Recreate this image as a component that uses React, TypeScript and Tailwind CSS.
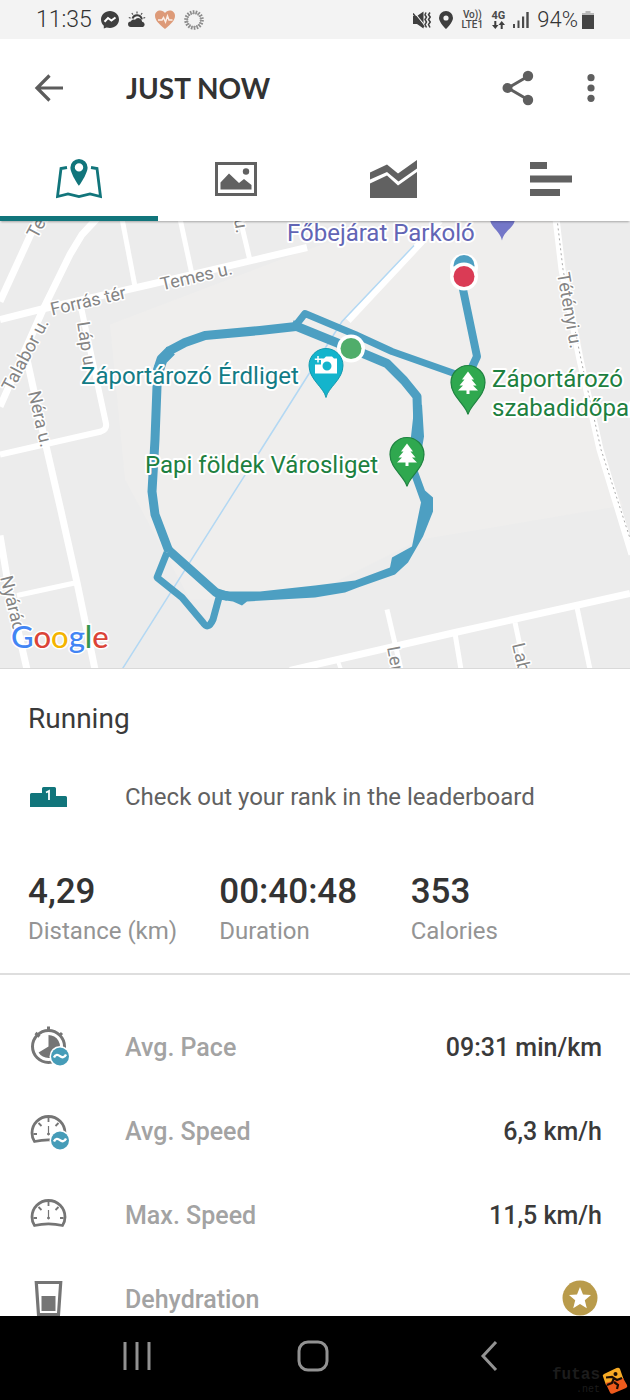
import type { ReactNode } from 'react';

const ROUTE = '#4d9fc2';

function StatusBar() {
  return (
    <div className="flex h-[39px] shrink-0 items-center justify-between bg-[#f3f3f3] pl-9 pr-9 text-[#4a4a4a]">
      <div className="flex items-center gap-[9px]">
        <span className="text-[23px] font-light leading-6 text-[#333]">11:35</span>
        <svg className="h-[18px] w-[18px]" viewBox="0 0 18 18" aria-hidden="true">
          <path fill="#3f3f3f" d="M9 0C4 0 0 3.700 0 8.500c0 2.500 1.100 4.700 2.800 6.200V17.600L5.600 16.400c1 .3 2.200.5 3.400.5 5 0 9-3.700 9-8.500S14 0 9 0z" />
          <path d="M3.500 10.800 7 7l3.400 2.600L14.500 6.500" fill="none" stroke="#fff" strokeWidth="2" />
        </svg>
        <svg className="h-[18px] w-[18px]" viewBox="0 0 18 18" aria-hidden="true">
          <path fill="#3f3f3f" d="M3 16a2.800 2.800 0 0 1-.3-5.600A3.500 3.500 0 0 1 7 8.700a4 4 0 0 1 7.200 2A2.800 2.800 0 0 1 15 16z" />
          <path d="M4.500 7.500a4.800 4.800 0 0 1 9.300.8" fill="none" stroke="#3f3f3f" strokeWidth="2" />
          <path d="M9 .5v2M3.800 2l1.200 1.600M14.200 2 13 3.600M.8 6.500l1.800.6M17.200 6.500l-1.800.6" stroke="#555" strokeWidth="1.200" />
        </svg>
        <svg className="h-[19px] w-5" viewBox="0 0 20 19" aria-hidden="true">
          <path fill="#dd9a78" d="M10 19C4 14 0 10.500 0 5.800 0 2.500 2.400.5 5.200.5c2 0 3.700 1 4.800 2.500C11.100 1.500 12.800.5 14.800.5 17.600.5 20 2.500 20 5.800 20 10.500 16 14 10 19z" />
          <path d="M3 10h4l1.500-2.500 2 4.500L12.500 6l1.500 4h3.500" fill="none" stroke="#fbeee6" strokeWidth="1.500" />
        </svg>
        <svg className="h-5 w-5" viewBox="0 0 20 20" aria-hidden="true">
          <circle cx="10" cy="10" r="7.800" fill="none" stroke="#8b8b8b" strokeWidth="4" strokeDasharray="1.500 1.220" />
          <circle cx="10" cy="10" r="7" fill="none" stroke="#999" strokeWidth="1" />
        </svg>
      </div>
      <div className="flex items-center gap-2">
        <svg className="h-[18px] w-[18px]" viewBox="0 0 18 18" aria-hidden="true">
          <path fill="#3f3f3f" d="M0 5h4l6.500-4.500v17L4 13H0z" />
          <path d="M1 1l12 15" stroke="#f3f3f3" strokeWidth="1.200" />
          <path d="M0 2.500 11 16" stroke="#3f3f3f" strokeWidth="1.500" />
          <path d="M13 1.500l-1 2.300 1.500 2.200-1.500 2.500 1.500 2.500-1.500 2.500 1.500 3M17 1.500 15.500 3.800 17.200 6l-1.700 2.500 1.700 2.500-1.700 2.500 1.500 3" fill="none" stroke="#3f3f3f" strokeWidth="1.500" />
        </svg>
        <svg className="h-[18px] w-[14px]" viewBox="0 0 14 18" aria-hidden="true">
          <path fill="#3f3f3f" fillRule="evenodd" d="M7 0a7 7 0 0 0-7 7c0 4.500 7 11 7 11s7-6.500 7-11a7 7 0 0 0-7-7zm0 4.400a2.600 2.600 0 1 1 0 5.200 2.600 2.600 0 0 1 0-5.200z" />
        </svg>
        <div className="flex w-[22px] flex-col items-center text-[10px] font-medium leading-[10px]">
          <span>Vo))</span>
          <span>LTE1</span>
        </div>
        <div className="flex w-[14px] flex-col items-center text-[11px] font-bold leading-[10px]">
          <span>4G</span>
          <svg className="h-[8px] w-[13px]" viewBox="0 0 13 8" aria-hidden="true">
            <path fill="#3f3f3f" d="M2.300 0h2v4H6.500L3.300 8 0 4h2.300zM8.700 8h2V4H13L9.700 0 6.500 4h2.200z" />
          </svg>
        </div>
        <svg className="h-4 w-4" viewBox="0 0 16 16" aria-hidden="true">
          <path fill="#4a4a4a" d="M0 12h2v4H0zM4.500 8.500h2V16h-2zM9 4.500h2.200V16H9zM13.300 0h2.400v16h-2.400z" />
        </svg>
        <div className="flex items-center gap-1">
          <span className="text-[22px] font-light leading-6 text-[#333]">94%</span>
          <svg className="h-[18px] w-3" viewBox="0 0 12 18" aria-hidden="true">
            <path fill="#b9b9b9" d="M3.500 0h5v2H12v3H0V2h3.500z" />
            <path fill="#444" d="M0 4h12v14H0z" />
          </svg>
        </div>
      </div>
    </div>
  );
}

function Header() {
  return (
    <header className="flex h-[98px] shrink-0 items-center pl-[34px] pr-7">
      <button type="button" aria-label="Back" className="flex w-[92px] items-center">
        <svg className="h-7 w-[30px]" viewBox="0 0 30 28" fill="none" stroke="#5c5c5c" strokeWidth="3.200" aria-hidden="true">
          <path d="M29 14H3M15.500 1.500 3 14l12.500 12.500" />
        </svg>
      </button>
      <h1 className="flex-1 font-['Lato'] text-[28px] font-bold leading-8 text-[#333]">JUST NOW</h1>
      <button type="button" aria-label="Share" className="mr-[46px]">
        <svg className="h-9 w-8" viewBox="0 0 32 36" fill="#5f5f5f" aria-hidden="true">
          <path d="M26.500 6 6 18l20.500 12" fill="none" stroke="#5f5f5f" strokeWidth="3" />
          <circle cx="5.500" cy="18" r="5" />
          <circle cx="26" cy="6" r="5.200" />
          <circle cx="26" cy="30" r="5.200" />
        </svg>
      </button>
      <button type="button" aria-label="More options" className="flex w-[22px] justify-center">
        <svg className="h-7 w-2" viewBox="0 0 8 28" fill="#5f5f5f" aria-hidden="true">
          <circle cx="4" cy="3.700" r="3.600" />
          <circle cx="4" cy="14" r="3.600" />
          <circle cx="4" cy="24.300" r="3.600" />
        </svg>
      </button>
    </header>
  );
}

function Tab({ label, active, children }: { label: string; active?: boolean; children: ReactNode }) {
  return (
    <button
      type="button"
      role="tab"
      aria-label={label}
      aria-selected={!!active}
      className={
        active
          ? 'flex flex-1 items-center justify-center border-b-[5px] border-[#11757b] pt-1'
          : 'flex flex-1 items-center justify-center border-b-[5px] border-transparent pt-1'
      }
    >
      {children}
    </button>
  );
}

function Tabs() {
  return (
    <div role="tablist" className="relative z-10 flex h-[84px] shrink-0 bg-white shadow-[0_2px_2px_-1px_rgba(0,0,0,0.3)]">
      <Tab label="Map" active>
        <svg className="h-10 w-[46px]" viewBox="0 0 46 40" aria-hidden="true">
          <path d="M11 8.500 5 9.500 1.500 37.500 12 35 23 37.500l11-2.500L44.500 37.500 41 9.500l-6-1" fill="none" stroke="#11757b" strokeWidth="2.800" />
          <path fill="#11757b" fillRule="evenodd" d="M23 0a8.600 8.600 0 0 0-8.600 8.600C14.400 15 23 27 23 27s8.600-12 8.600-18.400A8.600 8.600 0 0 0 23 0zm0 4.200a4.200 4.200 0 1 1 0 8.400 4.200 4.200 0 0 1 0-8.400z" />
        </svg>
      </Tab>
      <Tab label="Photos">
        <svg className="h-[34px] w-[42px]" viewBox="0 0 42 34" aria-hidden="true">
          <path d="M1.500 1.500h39v31h-39z" fill="none" stroke="#616161" strokeWidth="3" />
          <circle cx="31" cy="9.500" r="3.200" fill="#616161" />
          <path fill="#616161" d="M5.500 27.500v-7l8.500-9 10 9.500 5-4 7.500 6v4.500z" />
        </svg>
      </Tab>
      <Tab label="Charts">
        <svg className="h-[38px] w-12" viewBox="0 0 48 38" fill="#616161" aria-hidden="true">
          <path d="M0 12.500 17 4.500l11 9L47 0v8.500L28.500 21.500 17 12 0 19.500z" />
          <path d="M0 23.500 17 15.500 28 25.500 47 12v26H0z" />
        </svg>
      </Tab>
      <Tab label="Splits">
        <svg className="h-[34px] w-[42px]" viewBox="0 0 42 34" fill="#616161" aria-hidden="true">
          <path d="M0 0h17v7H0zM0 13.500h42v7H0zM0 27h30v7H0z" />
        </svg>
      </Tab>
    </div>
  );
}

function TreePin({ x, y }: { x: number; y: number }) {
  return (
    <g transform={`translate(${x} ${y})`}>
      <path d="M0 32C-2 22-17 14-17 0a17 17 0 0 1 34 0C17 14 2 22 0 32z" fill="#2fa84f" stroke="#1e8240" strokeWidth="1.200" />
      <path d="M0-11 6-3H3.500L8.500 3H5L10 8H1.500v3.500h-3V8H-10L-5 3h-3.500l5-6H-6z" fill="#fff" />
    </g>
  );
}

function RouteMap() {
  return (
    <svg
      className="block h-[448px] w-full shrink-0 border-b border-[#d9d9d9] bg-[#ececec]"
      viewBox="0 221 630 448"
      preserveAspectRatio="xMidYMid slice"
      role="img"
      aria-label="Route map"
    >
      <path d="M110 325 307 250 400 221h158l45 240 20 45L420 540 300 600 190 600 125 480z" fill="#efeeed" />
      <g fill="none" stroke="#fff" strokeWidth="7">
        <path d="M0 320 40 310 150 285 307 248" />
        <path d="M97 219 82 235 70 255 43 310 20 362 0 407" />
        <path d="M38 219 0 302" />
        <path d="M122 219 135 287" strokeWidth="5" />
        <path d="M180 219 192 275" strokeWidth="5" />
        <path d="M240 219 250 261" strokeWidth="5" />
        <path d="M80 303 106 424Q107 430 101 432L0 455" strokeWidth="6" />
        <path d="M27 360 45 442 60 507 77 583 95 670" strokeWidth="7" />
        <path d="M17 596 77 583" strokeWidth="5" />
        <path d="M0 536 10 596 27 670" strokeWidth="7" />
        <path d="M290 671 455 633 630 594" />
        <path d="M387 610 401 670" strokeWidth="5" />
        <path d="M455 634 461 670" strokeWidth="5" />
        <path d="M515 623 525 670" strokeWidth="5" />
        <path d="M577 608 590 670" strokeWidth="5" />
        <path d="M338 662 341 670" strokeWidth="4" />
        <path d="M556 219 562 270 580 360 600 450 632 555" />
        <path d="M440 221 421 243 348 321" />
      </g>
      <path d="M557 219 563 270 581 360 601 450 632 545" fill="none" stroke="#aaa" strokeDasharray="2 3" />
      <path d="M414 246 342 322 318 360 122 670" fill="none" stroke="#b3d8f3" strokeWidth="1.500" />

      <g fill="#858585" stroke="#fff" strokeWidth="3" paintOrder="stroke" strokeLinejoin="round" fontSize="18">
        <text transform="translate(37 240) rotate(-62)">Ter</text>
        <text transform="translate(234 220) rotate(80)">u.</text>
        <text transform="translate(52 316) rotate(-13)">Forrás tér</text>
        <text transform="translate(162 291) rotate(-13)">Temes u.</text>
        <text transform="translate(12 393) rotate(-62)">Talabor u.</text>
        <text transform="translate(77 323) rotate(81)">Láp u.</text>
        <text transform="translate(28 393) rotate(77)">Néra u.</text>
        <text transform="translate(0 578) rotate(76)">Nyárád</text>
        <text transform="translate(387 648) rotate(79)">Lenke</text>
        <text transform="translate(512 645) rotate(77)">Labda</text>
        <text transform="translate(557 274) rotate(80)">Tétényi u.</text>
      </g>

      <g fill="none" stroke={ROUTE} strokeLinejoin="round">
        <path d="M219 598 213 620Q208 631 203 623L182 598 157 578 167 553" strokeWidth="7" />
        <path d="M169 551 216 593 228 597" strokeWidth="9" />
        <path d="M169 552 155 515 152 492 155 440 157 387 159 366" strokeWidth="9" />
        <path d="M158 372 162 360 171 351" strokeWidth="11" />
        <path d="M168 352 185 343 205 336 260 331 296 327" strokeWidth="9" />
        <path d="M294 328 305 314 355 335 392 352 460 376" strokeWidth="7" />
        <path d="M292 325 351 349 368 356 387 364 404 381 417 397 418 430" strokeWidth="9" />
        <path d="M462 285 477 357 471 370" strokeWidth="8" />
      </g>
      <path
        d="M414 410 422 405 424 437 418 472 425 491 433 498 433 512 423 537 408 563 395 575 358 588 345 593 315 598 247 602 242 606 233 602 219 600 222 591 230 592 260 592 315 586 355 581 390 568 392 558 412 547 421 503 411 475 411 437z"
        fill={ROUTE}
      />

      <path d="M490 219h25c0 9-11 12-13 22-2-10-12-13-12-22z" fill="#7477c8" />
      <g>
        <circle cx="464" cy="268" r="14" fill="#fff" />
        <circle cx="464" cy="266" r="10.500" fill={ROUTE} />
        <circle cx="464" cy="277" r="14" fill="#fff" />
        <circle cx="464" cy="277" r="10.500" fill="#da3b55" />
        <circle cx="351" cy="349" r="14" fill="#fff" />
        <circle cx="351" cy="349" r="10.500" fill="#50ad6b" />
      </g>
      <TreePin x={468} y={383} />
      <TreePin x={407} y={455} />
      <g transform="translate(326 366)">
        <path d="M0 32C-2 22-17 14-17 0a17 17 0 0 1 34 0C17 14 2 22 0 32z" fill="#14b4cc" stroke="#1399ae" />
        <path fill="#fff" fillRule="evenodd" d="M-5-7h3l2-2H6l2 2h3V8H-11V-1h6zM1-4a4.500 4.500 0 1 0 0 9 4.500 4.500 0 0 0 0-9z" />
        <path d="M-8-9.500v6.500M-11.200-6.200h6.500" stroke="#fff" strokeWidth="1.500" />
        <circle cx="1" cy=".5" r="2.500" fill="#14b4cc" />
      </g>

      <g stroke="#fff" strokeWidth="4" paintOrder="stroke" strokeLinejoin="round" fontSize="24">
        <text x="287" y="241" fill="#6265b5">Főbejárat Parkoló</text>
        <text x="81" y="384" fill="#137c86">Záportározó Érdliget</text>
        <text x="145" y="473" fill="#1d8040">Papi földek Városliget</text>
        <text x="492" y="387" fill="#1d8040">Záportározó</text>
        <text x="492" y="416" fill="#1d8040">szabadidőpark</text>
      </g>
      <text x="11" y="648" className="font-['Lato'] font-medium" fontSize="31" stroke="#fff" strokeWidth="3" paintOrder="stroke">
        <tspan fill="#4285f4">G</tspan>
        <tspan fill="#db4437">o</tspan>
        <tspan fill="#f4b400">o</tspan>
        <tspan fill="#4285f4">g</tspan>
        <tspan fill="#35974f">l</tspan>
        <tspan fill="#db4437">e</tspan>
      </text>
    </svg>
  );
}

function ApproxBadge() {
  return (
    <g>
      <circle cx="30" cy="28.500" r="10.500" fill="#fff" />
      <circle cx="30" cy="28.500" r="9" fill="#469cb8" />
      <path d="M24 29.500c1.500-3.500 4-3 6-1.300s4.500 1.500 6-1.700" fill="none" stroke="#fff" strokeWidth="2.400" />
    </g>
  );
}

function Gauge() {
  return (
    <g fill="none" stroke="#757575">
      <path d="M4.500 29.500C2 26 2 23 2 21a16.500 16.500 0 0 1 33 0c0 2 0 5-2.500 8.500-9-2.200-19-2.200-28 0z" strokeWidth="2.800" />
      <path d="M18.500 6v4M8.500 11l3 3M28.500 11l-3 3M3.500 22h3.500M33.500 22h-3.500" strokeWidth="1.800" />
      <path d="M18.500 14v8" strokeWidth="1.200" />
      <circle cx="18.500" cy="22" r="1" fill="#757575" />
    </g>
  );
}

function PaceIcon() {
  return (
    <svg className="h-10 w-10 overflow-visible" viewBox="0 0 40 40" aria-hidden="true">
      <path d="M18.500-1.500v5M5.500 5l4 3.500M29.500 7.500 32 5" stroke="#757575" strokeWidth="3" />
      <circle cx="18.500" cy="18.500" r="16" fill="none" stroke="#757575" strokeWidth="3" />
      <path fill="#757575" d="M18.500 7a11.500 11.500 0 1 1-9.900 17.400L18.500 18.500z" />
      <ApproxBadge />
    </svg>
  );
}

function SpeedIcon({ approx }: { approx?: boolean }) {
  return (
    <svg className="h-10 w-10" viewBox="0 0 40 40" aria-hidden="true">
      <Gauge />
      {approx && <ApproxBadge />}
    </svg>
  );
}

function GlassIcon() {
  return (
    <svg className="h-10 w-10" viewBox="0 0 40 40" aria-hidden="true">
      <path d="M6.300 2.500h24.400L28.500 34.500h-20z" fill="none" stroke="#757575" strokeWidth="3.200" />
      <path fill="#757575" d="M11.500 16h14v15h-14z" />
    </svg>
  );
}

function Stat({ value, label }: { value: string; label: string }) {
  return (
    <div className="flex flex-col">
      <dt className="order-2 text-[24px] leading-8 text-[#949494]">{label}</dt>
      <dd className="text-[35px] font-medium leading-[46px] text-[#333]">{value}</dd>
    </div>
  );
}

function Row({ icon, label, children }: { icon: ReactNode; label: string; children: ReactNode }) {
  return (
    <li className="flex h-[84px] items-center pl-[30px] pr-7 text-[25px] leading-8">
      <span className="w-[95px]">{icon}</span>
      <span className="flex-1 font-medium text-[#a3a3a3]">{label}</span>
      {children}
    </li>
  );
}

function Value({ children }: { children: ReactNode }) {
  return <span className="font-medium text-[#3a3a3a]">{children}</span>;
}

function NavBar() {
  return (
    <nav className="relative flex h-[84px] shrink-0 items-center justify-between bg-black pb-1 pl-[121px] pr-[125px]">
      <button type="button" aria-label="Recent apps">
        <svg className="h-8 w-8" viewBox="0 0 32 32" stroke="#929292" strokeWidth="3" aria-hidden="true">
          <path d="M4 2v28M16 2v28M28 2v28" />
        </svg>
      </button>
      <button type="button" aria-label="Home">
        <svg className="h-8 w-8" viewBox="0 0 32 32" fill="none" stroke="#929292" strokeWidth="3" aria-hidden="true">
          <rect x="2" y="2" width="28" height="28" rx="9" />
        </svg>
      </button>
      <button type="button" aria-label="Back">
        <svg className="h-8 w-8" viewBox="0 0 32 32" fill="none" stroke="#929292" strokeWidth="3" aria-hidden="true">
          <path d="M23 2 10 16l13 14" />
        </svg>
      </button>
      <div className="absolute bottom-1 right-0.5 flex items-center gap-0.5">
        <div className="flex flex-col items-end font-['Liberation_Mono'] text-[#1c1c1c]">
          <span className="text-[16px] font-bold leading-[18px]">futas</span>
          <span className="text-[10px] leading-3">.net</span>
        </div>
        <svg className="h-7 w-[26px]" viewBox="0 0 26 28" aria-hidden="true">
          <path fill="#f8ab25" d="M1 9.500Q0 8 2 7L14.500 1Q17 0 18 2l3.500 10L4 18z" />
          <path fill="#ee5a1c" d="M3.500 16 21 11l4 7q1 2-1 3L11 26.500q-2 1-3-1z" />
          <path d="M4 10.500l6-.5 5 3 5-2M12 11l-2 5-5 2M12 15l4 3-1 4" fill="none" stroke="#1a0c05" strokeWidth="2.200" />
          <circle cx="13.500" cy="7" r="2" fill="#1a0c05" />
        </svg>
      </div>
    </nav>
  );
}

export default function App() {
  return (
    <div className="flex h-screen flex-col bg-white font-['Roboto',sans-serif]">
      <StatusBar />
      <Header />
      <Tabs />
      <main className="min-h-0 flex-1 overflow-y-auto [scrollbar-width:none]">
        <RouteMap />
        <section className="border-b-2 border-[#dedede] pb-[26px]">
          <h2 className="px-7 pt-8 text-[28px] leading-9 text-[#3a3a3a]">Running</h2>
          <a href="#leaderboard" className="mt-11 flex items-center pl-[30px] pr-7 text-[24px] leading-8 text-[#616161]">
            <span className="w-[95px]">
              <svg className="h-5 w-[37px]" viewBox="0 0 37 20" aria-hidden="true">
                <path fill="#11757b" d="M0 7.500q0-1.500 1.500-1.500H12V1.500Q12 0 13.500 0h11Q26 0 26 1.500V9h9.500q1.500 0 1.500 1.500V20H0z" />
                <path d="M16 5.500 19 4v9" fill="none" stroke="#fff" strokeWidth="1.800" />
              </svg>
            </span>
            Check out your rank in the leaderboard
          </a>
          <dl className="mt-14 grid grid-cols-3 px-7">
            <Stat value="4,29" label="Distance (km)" />
            <Stat value="00:40:48" label="Duration" />
            <Stat value="353" label="Calories" />
          </dl>
        </section>
        <ul className="pt-[31px]">
          <Row icon={<PaceIcon />} label="Avg. Pace">
            <Value>09:31 min/km</Value>
          </Row>
          <Row icon={<SpeedIcon approx />} label="Avg. Speed">
            <Value>6,3 km/h</Value>
          </Row>
          <Row icon={<SpeedIcon />} label="Max. Speed">
            <Value>11,5 km/h</Value>
          </Row>
          <Row icon={<GlassIcon />} label="Dehydration">
            <svg className="mb-1 mr-1 h-9 w-9" viewBox="0 0 36 36" aria-label="Premium">
              <circle cx="18" cy="18" r="17.500" fill="#b99b4b" />
              <path fill="#fff" d="M18 7l3 7.600 8 .5-6.200 5.200 2 8L18 24l-6.800 4.300 2-8L7 15.100l8-.5z" />
            </svg>
          </Row>
        </ul>
      </main>
      <NavBar />
    </div>
  );
}
